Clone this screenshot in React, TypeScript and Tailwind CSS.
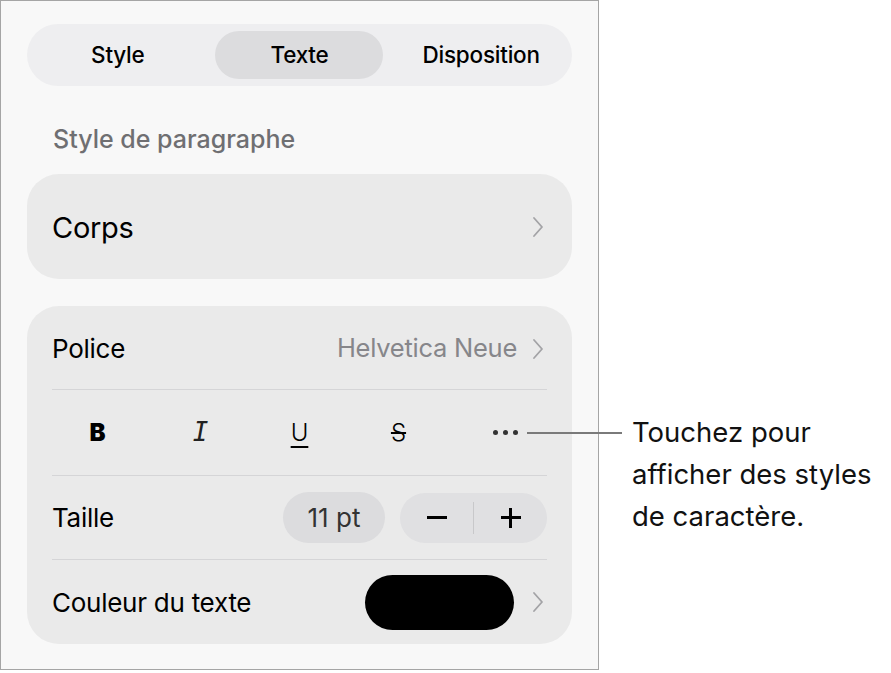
import React from 'react'

const font = { fontFamily: 'Inter, "Noto Sans", sans-serif' }

function Chevron() {
  return (
    <svg width="14" height="22" viewBox="0 0 14 22" className="shrink-0" aria-hidden>
      <polyline points="3,2 11,11 3,20" fill="none" stroke="#a3a3a6" strokeWidth="1.8" strokeLinecap="round" strokeLinejoin="round" />
    </svg>
  )
}

export default function App() {
  const tabs = ['Style', 'Texte', 'Disposition']

  return (
    <div className="relative h-[673px] w-[891px] bg-white text-black" style={font}>
      <div className="flex h-[670px] w-[599px] flex-col border border-[#a5a5a5] bg-[#f8f8f8] px-[26px] pt-[23px]">
        <div className="grid h-[62px] grid-cols-3 rounded-full bg-[#eeeef0]">
          {tabs.map((t) => (
            <div key={t} className="flex items-center justify-center">
              <div
                className={`flex h-[48px] w-[168px] items-center justify-center rounded-full text-[22.5px] font-medium tracking-[-0.01em] ${
                  t === 'Texte' ? 'bg-[#dcdcde]' : ''
                }`}
              >
                {t}
              </div>
            </div>
          ))}
        </div>

        <p className="mt-[41px] pl-[26px] text-[25px] font-medium leading-none text-[#6f6f72]">Style de paragraphe</p>

        <div className="mt-[22px] flex h-[105px] items-center justify-between rounded-[32px] bg-[#eaeaea] pl-[25px] pr-[27px]">
          <span className="pt-[2px] text-[29px] tracking-[-0.01em]">Corps</span>
          <Chevron />
        </div>

        <div className="mt-[27px] flex flex-col rounded-[32px] bg-[#eaeaea] px-[25px]">
          <div className="flex h-[83px] items-center justify-between pt-[2px]">
            <span className="text-[26px] tracking-[-0.01em]">Police</span>
            <div className="flex items-center gap-[14px] pr-[2px]">
              <span className="text-[25.5px] text-[#86868a] tracking-[-0.01em]">Helvetica Neue</span>
              <Chevron />
            </div>
          </div>

          <div className="grid h-[86px] grid-cols-5 items-center border-t border-[#d5d5d7]">
            <div className="flex justify-center pr-[8px]">
              <span className="text-[24px] font-black">B</span>
            </div>
            <div className="flex justify-center">
              <span className="text-[26px] italic text-[#222]" style={{ fontFamily: '"DejaVu Sans Mono", monospace' }}>I</span>
            </div>
            <div className="flex justify-center">
              <span className="text-[24px] font-light underline decoration-[1.5px] underline-offset-[5px]">U</span>
            </div>
            <div className="flex justify-center">
              <span className="text-[24px] font-light line-through decoration-[1.5px]">S</span>
            </div>
            <div className="flex justify-center gap-[5px] pl-[16px]">
              <span className="h-[5px] w-[5px] rounded-full bg-[#333]" />
              <span className="h-[5px] w-[5px] rounded-full bg-[#333]" />
              <span className="h-[5px] w-[5px] rounded-full bg-[#333]" />
            </div>
          </div>

          <div className="flex h-[84px] items-center justify-between border-t border-[#d5d5d7]">
            <span className="text-[26px] tracking-[-0.01em]">Taille</span>
            <div className="flex items-center gap-[15px]">
              <div className="flex h-[51px] w-[102px] items-center justify-center rounded-full bg-[#dcdcde] text-[26px] text-[#333]">
                11 pt
              </div>
              <div className="flex h-[50px] w-[147px] items-center rounded-full bg-[#e0e0e2]">
                <div className="flex flex-1 items-center justify-center">
                  <span className="h-[2.5px] w-[20px] bg-black" />
                </div>
                <span className="h-[32px] w-px bg-[#c8c8ca]" />
                <div className="relative flex flex-1 items-center justify-center">
                  <span className="h-[2.5px] w-[20px] bg-black" />
                  <span className="absolute h-[20px] w-[2.5px] bg-black" />
                </div>
              </div>
            </div>
          </div>

          <div className="flex h-[85px] items-center justify-between border-t border-[#d5d5d7]">
            <span className="text-[26px] tracking-[-0.01em]">Couleur du texte</span>
            <div className="flex items-center gap-[17px] pr-[2px]">
              <div className="h-[55px] w-[149px] rounded-full bg-black" />
              <Chevron />
            </div>
          </div>
        </div>
      </div>

      <div className="absolute left-[527px] top-[432px] h-[1.5px] w-[95px] bg-[#7a7a7a]" />
      <p className="absolute left-[632px] top-[411px] text-[27.5px] leading-[42px] text-[#111]">
        Touchez pour
        <br />
        afficher des styles
        <br />
        de caractère.
      </p>
    </div>
  )
}
